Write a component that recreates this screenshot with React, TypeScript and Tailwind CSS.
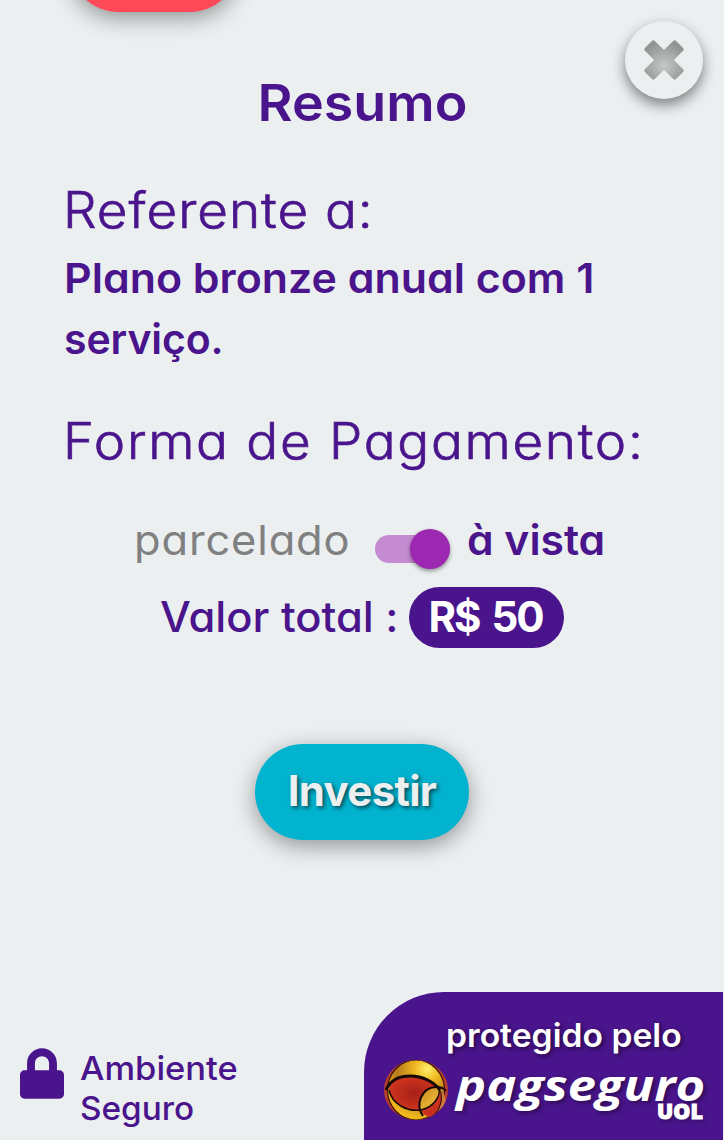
import { FaLock } from "react-icons/fa";

function PagSeguroOrb() {
  return (
    <svg className="mt-[2px] h-[62px] w-[66px] shrink-0" viewBox="0 0 66 62">
      <defs>
        <radialGradient id="gold" gradientUnits="userSpaceOnUse" cx="44" cy="10" r="50">
          <stop offset="0" stopColor="#fff06a" />
          <stop offset="0.25" stopColor="#efb820" />
          <stop offset="0.6" stopColor="#b87a1c" />
          <stop offset="1" stopColor="#f0b81e" />
        </radialGradient>
        <radialGradient id="red" cx="0.5" cy="0.5" r="0.6">
          <stop offset="0" stopColor="#a82018" />
          <stop offset="1" stopColor="#d5391f" />
        </radialGradient>
        <linearGradient id="amber" gradientUnits="userSpaceOnUse" x1="38" y1="30" x2="56" y2="48">
          <stop offset="0" stopColor="#c98a1c" />
          <stop offset="1" stopColor="#f6c540" />
        </linearGradient>
        <clipPath id="ball">
          <ellipse cx="33" cy="31" rx="32" ry="30" />
        </clipPath>
      </defs>
      <g clipPath="url(#ball)">
        <rect width="66" height="62" fill="#b8402a" />
        <ellipse cx="33" cy="31" rx="28.5" ry="30" fill="url(#gold)" stroke="#3d1408" strokeWidth="1.2" />
        <path d="M56 30Q64 34 62 46L53 54Q60 42 56 30Z" fill="#cf7a3c" />
        <path d="M6 30C9 21 17 17 27 17C39 17 49 23 56 30C55 40 48 48 38 51C22 53 7 43 6 30Z" fill="url(#red)" />
        <path d="M38 51C48 48 54 41 57 33C61 42 57 52 47 58Q41 57 38 51Z" fill="#c9301f" />
        <path d="M37 50C34 40 41 28 55 28C60 35 52 48 38 51Z" fill="url(#amber)" />
        <path d="M3 31C8 20 17 17 27 17C40 17 51 23 57 31" fill="none" stroke="#170706" strokeWidth="3" />
        <path d="M6 31C9 45 24 53 38 51C51 48 58 37 56 28" fill="none" stroke="#170706" strokeWidth="1.5" />
        <path d="M40 57C32 46 38 28 54 28Q60 28 63 32" fill="none" stroke="#170706" strokeWidth="2" />
        <path d="M56 29Q63 41 51 58" fill="none" stroke="#170706" strokeWidth="1" />
      </g>
    </svg>
  );
}

export default function App() {
  return (
    <div className="relative flex h-[1140px] w-[724px] flex-col overflow-hidden bg-[#ebeff0] font-['Inter',sans-serif] text-[#4a148c] [font-feature-settings:'cv11']">
      <div className="ml-[70px] h-3 w-[168px] shrink-0">
        <div className="-mt-[84px] h-24 rounded-full bg-[#ff4858] shadow-[0_6px_22px_rgba(0,0,0,0.38)]" />
      </div>
      <button className="absolute left-[625px] top-[21px] flex size-[78px] items-center justify-center rounded-full bg-[#ebeff0] shadow-[0_6px_14px_rgba(0,0,0,0.48)]">
        <svg className="size-[42px]" viewBox="-21 -21 42 42">
          <defs>
            <radialGradient id="cross" gradientUnits="userSpaceOnUse" cx="4" cy="4" r="24">
              <stop offset="0" stopColor="#c6c8c8" />
              <stop offset="1" stopColor="#919393" />
            </radialGradient>
          </defs>
          <path transform="rotate(45)" fill="url(#cross)" d="M-7-20q0-2 2-2H5q2 0 2 2V-7H20q2 0 2 2V5q0 2-2 2H7V20q0 2-2 2H-5q-2 0-2-2V7H-20q-2 0-2-2V-5q0-2 2-2H-7Z" />
        </svg>
      </button>
      <h1 className="mt-[51px] flex h-20 items-center justify-center text-[51px] font-semibold"><span className="scale-x-[1.055]">Resumo</span></h1>
      <main className="flex flex-col">
        <h2 className="ml-[63px] mt-8 flex h-[70px] w-[560px] origin-left scale-x-[1.06] items-center text-[50px] font-light tracking-[0.9px] [-webkit-text-stroke:0.7px_#4a148c]">Referente a:</h2>
        <p className="ml-[64px] mt-[3px] w-[560px] text-[41px] font-semibold leading-[61px]">
          <span className="block origin-left scale-x-[1.046] whitespace-nowrap">Plano bronze anual com 1</span>
          <span className="block tracking-[-0.1px]">serviço.</span>
        </p>
        <h2 className="ml-[63px] mt-[36px] flex h-[70px] w-[560px] origin-left scale-x-[1.06] items-center whitespace-nowrap text-[50px] font-light tracking-[1.6px] [-webkit-text-stroke:0.7px_#4a148c]">Forma de Pagamento:</h2>
        <div className="mt-[34px] flex h-[62px] items-center pl-[134px] text-[41px]">
          <span className="w-[241px] origin-left scale-x-[1.06] tracking-[0.8px] text-[#808080]">parcelado</span>
          <span className="mt-[15px] flex h-7 w-[75px] items-center justify-end rounded-full bg-[#c48bd0]">
            <span className="size-10 rounded-full bg-[#9c27b0] shadow-[0_2px_4px_rgba(0,0,0,0.4)]" />
          </span>
          <span className="ml-[17px] origin-left scale-x-[1.04] font-semibold">à vista</span>
        </div>
        <div className="mt-[15px] flex h-[61px] items-center pl-[160px] text-[42px] font-medium">
          <span className="-mt-[3px] w-[249px] origin-left scale-x-[1.035]">Valor total :</span>
          <span className="flex h-[61px] w-[155px] items-center justify-center rounded-full bg-[#4a148c] pb-[3px] pr-0.5 font-bold tracking-[-2px] text-white [word-spacing:4px]">R$ 50</span>
        </div>
        <button className="ml-[255px] mt-24 flex h-24 w-[214px] items-center justify-center rounded-full bg-[#02b3cf] pb-1 text-[42px] font-bold tracking-[-0.7px] text-[#ebeff0] shadow-[0_6px_22px_rgba(0,0,0,0.38)] [text-shadow:2px_2px_4px_rgba(0,0,0,0.6)]">Investir</button>
      </main>
      <footer className="mt-auto flex h-[148px] shrink-0 justify-between pr-px">
        <div className="flex pl-5 pt-14">
          <FaLock className="h-[51px] w-[44px]" />
          <p className="ml-4 text-[33px] font-medium leading-10"><span className="block origin-left scale-x-[1.045]">Ambiente</span><span className="block origin-left scale-x-[1.01]">Seguro</span></p>
        </div>
        <div className="h-[148px] w-[359px] rounded-tl-[80px] bg-[#4a148c] text-white">
          <p className="ml-[82px] mt-[22px] h-[42px] origin-left scale-x-[1.02] text-[33px] font-semibold leading-[42px] [text-shadow:2px_2px_4px_rgba(0,0,0,0.5)]">protegido pelo</p>
          <div className="mt-px ml-[19px] flex">
            <PagSeguroOrb />
            <div className="ml-[7px] flex w-[248px] flex-col font-['Open_Sans',sans-serif] [text-shadow:2px_2px_4px_rgba(0,0,0,0.4)]">
              <span className="h-[42px] origin-left scale-x-[1.18] text-[43px] font-bold italic leading-[56px]">pagseguro</span>
              <span className="mr-px origin-right scale-x-[1.02] self-end text-[21px] font-extrabold leading-[25px] [-webkit-text-stroke:1px_white]">UOL</span>
            </div>
          </div>
        </div>
      </footer>
    </div>
  );
}
